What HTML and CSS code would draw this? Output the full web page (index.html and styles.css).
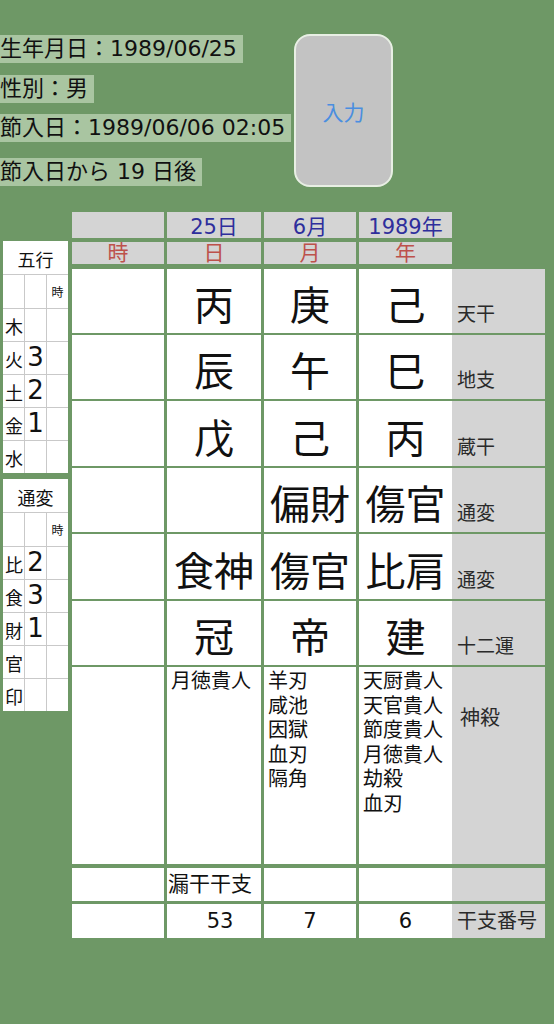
FILE: index.html
```html
<!DOCTYPE html>
<html lang="ja">
<head>
  <meta charset="UTF-8" />
  <meta name="viewport" content="width=device-width, initial-scale=1.0"/>
  <title>命式</title>
  <link rel="stylesheet" href="styles.css">
</head>
<body>

  <div class="top">
    <div class="info">
      <div class="info-line"><span>生年月日：1989/06/25</span></div>
      <div class="info-line gap-1"><span>性別：男</span></div>
      <div class="info-line gap-2"><span>節入日：1989/06/06 02:05</span></div>
      <div class="info-line gap-3"><span>節入日から 19 日後</span></div>
    </div>
    <button class="input-btn">入力</button>
  </div>

  <div class="main">
    <!-- left side counters -->
    <div class="side">
      <div class="mini">
        <div class="mini-head">五行</div>
        <div></div><div></div><div class="tiny">時</div>
        <div class="k">木</div><div class="n"></div><div></div>
        <div class="k">火</div><div class="n">3</div><div></div>
        <div class="k">土</div><div class="n">2</div><div></div>
        <div class="k">金</div><div class="n">1</div><div></div>
        <div class="k">水</div><div class="n"></div><div></div>
      </div>
      <div class="mini">
        <div class="mini-head">通変</div>
        <div></div><div></div><div class="tiny">時</div>
        <div class="k">比</div><div class="n">2</div><div></div>
        <div class="k">食</div><div class="n">3</div><div></div>
        <div class="k">財</div><div class="n">1</div><div></div>
        <div class="k">官</div><div class="n"></div><div></div>
        <div class="k">印</div><div class="n"></div><div></div>
      </div>
    </div>

    <!-- main chart -->
    <div class="chart">
      <div class="row hd1">
        <div class="hc"></div>
        <div class="hc date">25日</div>
        <div class="hc date">6月</div>
        <div class="hc date">1989年</div>
        <div></div>
      </div>
      <div class="row hd2">
        <div class="hc pillar">時</div>
        <div class="hc pillar">日</div>
        <div class="hc pillar">月</div>
        <div class="hc pillar">年</div>
        <div></div>
      </div>

      <div class="row body first h64">
        <div class="c"></div>
        <div class="c">丙</div>
        <div class="c">庚</div>
        <div class="c">己</div>
        <div class="lbl">天干</div>
      </div>
      <div class="row body h64">
        <div class="c"></div>
        <div class="c">辰</div>
        <div class="c">午</div>
        <div class="c">巳</div>
        <div class="lbl">地支</div>
      </div>
      <div class="row body h65">
        <div class="c"></div>
        <div class="c">戊</div>
        <div class="c">己</div>
        <div class="c">丙</div>
        <div class="lbl">蔵干</div>
      </div>
      <div class="row body h64">
        <div class="c"></div>
        <div class="c"></div>
        <div class="c">偏財</div>
        <div class="c">傷官</div>
        <div class="lbl">通変</div>
      </div>
      <div class="row body h65">
        <div class="c"></div>
        <div class="c">食神</div>
        <div class="c">傷官</div>
        <div class="c">比肩</div>
        <div class="lbl">通変</div>
      </div>
      <div class="row body h64">
        <div class="c"></div>
        <div class="c">冠</div>
        <div class="c">帝</div>
        <div class="c">建</div>
        <div class="lbl">十二運</div>
      </div>
      <div class="row body stars">
        <div class="c"></div>
        <div class="c list">月徳貴人</div>
        <div class="c list">羊刃<br>咸池<br>因獄<br>血刃<br>隔角</div>
        <div class="c list">天厨貴人<br>天官貴人<br>節度貴人<br>月徳貴人<br>劫殺<br>血刃</div>
        <div class="lbl top-lbl">神殺</div>
      </div>
      <div class="row body small-row leak">
        <div class="c"></div>
        <div class="c sm left">漏干干支</div>
        <div class="c"></div>
        <div class="c"></div>
        <div class="lbl"></div>
      </div>
      <div class="row body small-row num">
        <div class="c"></div>
        <div class="c sm shift">53</div>
        <div class="c sm">7</div>
        <div class="c sm">6</div>
        <div class="lbl wide">干支番号</div>
      </div>
    </div>
  </div>

</body>
</html>
```

FILE: styles.css
```css
:root {
  --bg-color: #6e9866;
  --hl-color: #a9c5a1;
  --gray: #d4d4d4;
  --thin-line: #c9c9c9;
  --text-color: #111111;
  --date-color: #2e2e9c;
  --pillar-color: #bd514b;
}

body {
  margin: 0;
  background-color: var(--bg-color);
  color: var(--text-color);
  font-family: "DejaVu Sans", "Noto Sans CJK JP", sans-serif;
}

/* Top info */
.top {
  display: flex;
  align-items: flex-start;
  padding-top: 34px;
}

.info {
  width: 294px;
  padding-top: 1px;
}

.info-line span {
  display: inline-block;
  height: 28px;
  line-height: 28px;
  font-size: 22px;
  padding-right: 6px;
  background-color: var(--hl-color);
  white-space: nowrap;
}

.gap-1 { margin-top: 12px; }
.gap-2 { margin-top: 11px; }
.gap-3 { margin-top: 16px; }

.input-btn {
  width: 99px;
  height: 153px;
  background-color: #c3c3c3;
  border: 2px solid #e8efe4;
  border-radius: 16px;
  color: #4a8ee0;
  font-family: "Noto Sans CJK JP", sans-serif;
  font-size: 21px;
  padding: 0;
}

/* Main area */
.main {
  display: flex;
  align-items: flex-start;
  margin-top: 25px;
}

.side {
  margin-left: 3px;
  margin-top: 29px;
  display: flex;
  flex-direction: column;
  gap: 6px;
}

.mini {
  display: grid;
  grid-template-columns: 21px 21px 21px;
  grid-template-rows: 33px 33px repeat(5, 32px);
  gap: 1px;
  background-color: var(--thin-line);
  width: 65px;
}

.mini > div {
  background-color: #fff;
  display: flex;
  align-items: flex-end;
}

.mini .mini-head {
  grid-column: 1 / 4;
  justify-content: center;
  font-size: 18px;
  line-height: 1;
  padding-bottom: 4px;
}

.mini .tiny {
  font-size: 12px;
  align-items: center;
  justify-content: center;
}

.mini .k {
  font-size: 18px;
  line-height: 1;
  padding-left: 2px;
  padding-bottom: 4px;
}

.mini .n {
  font-size: 26px;
  line-height: 1;
  justify-content: center;
  padding-bottom: 4px;
}

/* Chart */
.chart {
  margin-left: 4px;
  display: flex;
  flex-direction: column;
}

.row {
  display: grid;
  grid-template-columns: 92px 94px 92px 93px 90px;
  column-gap: 3px;
}

.hd1 { height: 26px; }
.hd2 { height: 21px; margin-top: 4px; }

.hc {
  background-color: var(--gray);
  display: flex;
  justify-content: center;
  align-items: flex-end;
  line-height: 1;
}

.hc.date {
  color: var(--date-color);
  font-size: 21px;
  white-space: nowrap;
}

.hc.pillar {
  color: var(--pillar-color);
  font-size: 21px;
  margin-bottom: -1px;
}

.body { margin-top: 2px; }
.body.first { margin-top: 6px; }
.h64 { height: 64px; }
.h65 { height: 65px; }
.stars { height: 197px; }
.leak { height: 33px; margin-top: 4px; }
.num { height: 34px; margin-top: 3px; }

.c {
  background-color: #fff;
  display: flex;
  justify-content: center;
  align-items: flex-end;
  font-size: 40px;
  line-height: 1;
  padding-bottom: 7px;
  white-space: nowrap;
}

.c.list {
  display: block;
  font-size: 20px;
  line-height: 24.5px;
  padding: 2px 0 0 4px;
}

.c.sm {
  font-size: 21px;
  padding-bottom: 6px;
}

.c.left {
  justify-content: flex-start;
  padding-left: 1px;
}

.c.shift {
  padding-left: 12px;
}

.lbl {
  margin-left: -3px;
  background-color: var(--gray);
  color: #2a2a2a;
  font-size: 19px;
  line-height: 1;
  display: flex;
  align-items: flex-end;
  padding-left: 5px;
  padding-bottom: 9px;
}

.lbl.top-lbl {
  align-items: flex-start;
  padding-top: 41px;
  padding-left: 8px;
  font-size: 20px;
}

.lbl.wide {
  font-size: 20px;
  padding-bottom: 7px;
  white-space: nowrap;
}
```
